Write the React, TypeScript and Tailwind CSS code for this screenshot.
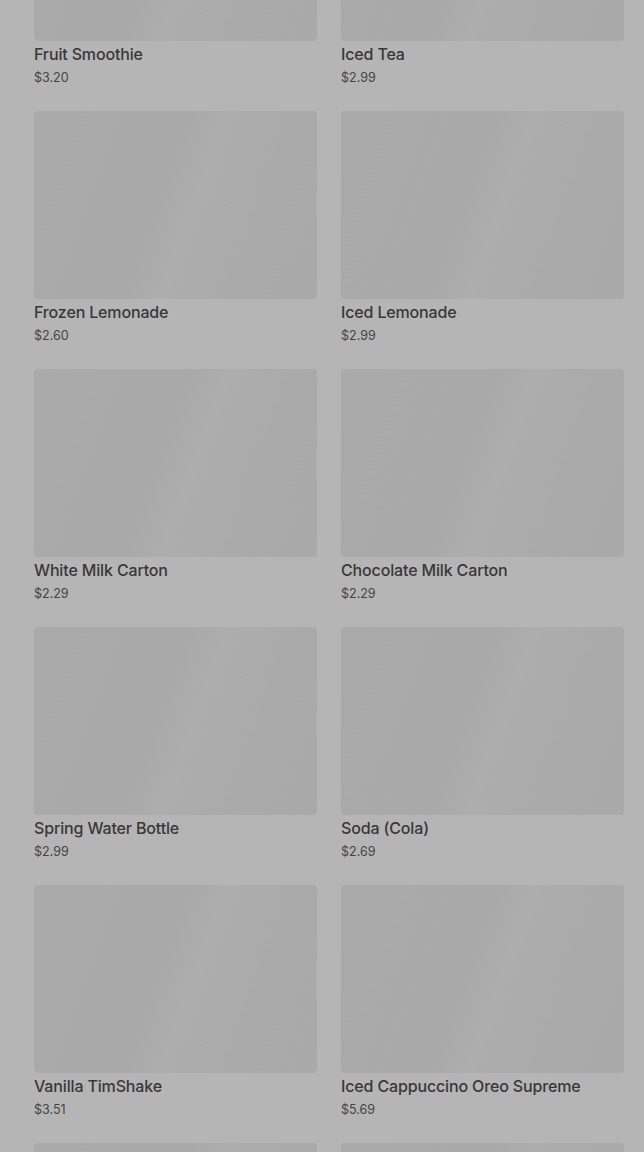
import React from "react";

const items: [string, string][] = [
  ["Fruit Smoothie", "$3.20"],
  ["Iced Tea", "$2.99"],
  ["Frozen Lemonade", "$2.60"],
  ["Iced Lemonade", "$2.99"],
  ["White Milk Carton", "$2.29"],
  ["Chocolate Milk Carton", "$2.29"],
  ["Spring Water Bottle", "$2.99"],
  ["Soda (Cola)", "$2.69"],
  ["Vanilla TimShake", "$3.51"],
  ["Iced Cappuccino Oreo Supreme", "$5.69"],
  ["", ""],
  ["", ""],
];

export default function App() {
  return (
    <div
      className="w-[644px] h-[1152px] overflow-hidden bg-[#b5b5b5]"
      style={{ fontFamily: "Inter, Roboto, 'Liberation Sans', sans-serif" }}
    >
      <div className="-mt-[147px] pl-[34px] pr-[20px] grid grid-cols-2 gap-x-[24px] gap-y-[23px]">
        {items.map(([name, price], i) => (
          <div key={i} className="flex flex-col">
            <div className="h-[188px] rounded-[4px] bg-[linear-gradient(110deg,#aaaaaa_0%,#a9a9a9_45%,#adadad_55%,#aaaaaa_75%,#a9a9a9_100%)]" />
            <div className="mt-[1px] text-[16px] leading-[24px] font-medium tracking-[-0.15px] text-[#383838]">
              {name}
            </div>
            <div className="mt-[2px] text-[12.5px] leading-[20px] text-[#444444]">
              {price}
            </div>
          </div>
        ))}
      </div>
    </div>
  );
}
